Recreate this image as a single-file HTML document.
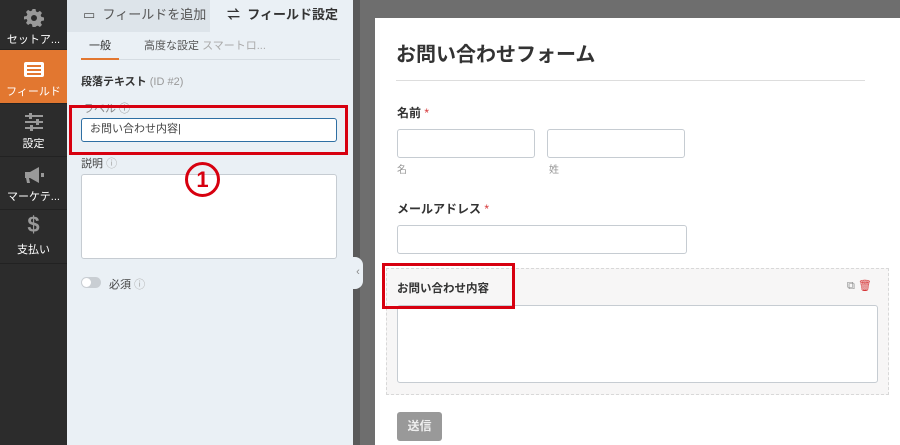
<!DOCTYPE html>
<html><head><meta charset="utf-8"><style>
*{box-sizing:border-box;margin:0;padding:0}
body{width:900px;height:445px;overflow:hidden;position:relative;font-family:"Liberation Sans","Noto Sans CJK JP",sans-serif;background:#6e6e6e}
.abs{position:absolute}
#side{left:0;top:0;width:67px;height:445px;background:#2c2c2c}
.nav{position:absolute;left:0;width:67px;height:53px;color:#fff;font-size:11px;text-align:center;border-bottom:1px solid #222}
.nav .ic{height:28px;display:flex;align-items:flex-end;justify-content:center}
#panel{left:67px;top:0;width:286px;height:445px;background:#eaf0f5}
.lbl{font-size:11px;color:#444}
.inp{background:#fff;border:1px solid #c6ccd2;border-radius:3px}
#card{left:375px;top:18px;width:525px;height:427px;background:#fff}
.fl{font-size:12px;font-weight:bold;color:#333}
.req{color:#d63638;font-weight:normal}
.red{border:3px solid #d7000f}
</style></head><body>
<div id="side" class="abs">
 <div class="nav" style="top:0;height:50px"><div class="ic"><svg width="20" height="20" viewBox="0 0 20 20"><path fill="#999" d="M8.5 1h3l.5 2.5 1.8.8 2.1-1.4 2.1 2.1-1.4 2.1.8 1.8 2.6.6v3l-2.6.5-.8 1.8 1.4 2.1-2.1 2.1-2.1-1.4-1.8.8L11.5 19h-3l-.5-2.6-1.8-.8-2.1 1.4-2.1-2.1 1.4-2.1-.8-1.8L0 11.5v-3l2.6-.5.8-1.8L2 4l2.1-2.1 2.1 1.4L8 2.5z"/><circle cx="10" cy="10" r="3" fill="#2c2c2c"/></svg></div><div style="margin-top:3px">セットア...</div></div>
 <div class="nav" style="top:50px;height:54px;background:#e27730"><div class="ic"><svg width="22" height="18"><rect x="1" y="2" width="20" height="15" rx="2" fill="#fff"/><rect x="4" y="5" width="14" height="2" fill="#e27730"/><rect x="4" y="9" width="14" height="2" fill="#e27730"/><rect x="4" y="13" width="14" height="2" fill="#e27730"/></svg></div><div style="margin-top:5px">フィールド</div></div>
 <div class="nav" style="top:104px"><div class="ic"><svg width="20" height="20"><g fill="#999"><rect x="1" y="3" width="18" height="2"/><rect x="1" y="9" width="18" height="2"/><rect x="1" y="15" width="18" height="2"/><rect x="5" y="1" width="3" height="6"/><rect x="12" y="7" width="3" height="6"/><rect x="6" y="13" width="3" height="6"/></g></svg></div><div style="margin-top:3px">設定</div></div>
 <div class="nav" style="top:157px"><div class="ic"><svg width="22" height="20"><path fill="#999" d="M2 7h5l9-5v16l-9-5H6l1 5H4l-1-5H2z"/><rect x="18" y="8" width="3" height="4" fill="#999"/></svg></div><div style="margin-top:3px">マーケテ...</div></div>
 <div class="nav" style="top:210px;height:54px"><div class="ic" style="font-size:22px;font-weight:bold;color:#999">$</div><div style="margin-top:3px">支払い</div></div>
</div>
<div id="panel" class="abs">
 <div class="abs" style="left:0;top:0;width:143px;height:32px;background:#dde4ea;color:#555;font-size:13px;line-height:30px;padding-left:16px">▭&nbsp; フィールドを追加</div>
 <div class="abs" style="left:160px;top:0;width:126px;height:32px;color:#333;font-size:13px;font-weight:bold;line-height:30px">⇌&nbsp; フィールド設定</div>
 <div class="abs" style="left:14px;top:37px;width:259px;height:23px;border-bottom:1px solid #d5dce2"></div>
 <div class="abs" style="left:14px;top:37px;width:38px;height:23px;border-bottom:2px solid #e27730;font-size:11px;color:#333;text-align:center;line-height:18px">一般</div>
 <div class="abs" style="left:77px;top:37px;font-size:11px;color:#555;line-height:18px">高度な設定 <span style="color:#aaa">スマートロ...</span></div>
 <div class="abs" style="left:14px;top:73px;font-size:11px;font-weight:bold;color:#333">段落テキスト <span style="font-weight:normal;color:#999">(ID #2)</span></div>
 <div class="abs lbl" style="left:16px;top:100px;color:#888">ラベル ⓘ</div>
 <div class="abs inp" style="left:14px;top:118px;width:256px;height:24px;border:1.5px solid #2e6fa3;font-size:11px;color:#444;line-height:21px;padding-left:8px">お問い合わせ内容|</div>
 <div class="abs red" style="left:2px;top:105px;width:279px;height:50px"></div>
 <div class="abs lbl" style="left:14px;top:155px">説明 <span style="color:#aaa">ⓘ</span></div>
 <div class="abs inp" style="left:14px;top:174px;width:256px;height:85px"></div>
 <div class="abs" style="left:118px;top:162px;width:35px;height:35px;border:3px solid #d7000f;border-radius:50%;color:#d7000f;font-size:22px;font-weight:bold;text-align:center;line-height:29px">1</div>
 <div class="abs" style="left:14px;top:277px;width:20px;height:11px;border-radius:6px;background:#c9ced3"><div style="width:9px;height:9px;margin:1px;border-radius:50%;background:#fff"></div></div>
 <div class="abs lbl" style="left:42px;top:276px">必須 <span style="color:#aaa">ⓘ</span></div>
</div>
<div class="abs" style="left:353px;top:0;width:7px;height:445px;background:#5a5a5a"></div>
<div class="abs" style="left:353px;top:257px;width:10px;height:32px;background:#eaf0f5;border-radius:0 8px 8px 0;color:#888;font-size:11px;line-height:30px;text-align:center">‹</div>
<div id="card" class="abs">
 <div class="abs" style="left:21px;top:20px;font-size:20px;font-weight:bold;color:#333">お問い合わせフォーム</div>
 <div class="abs" style="left:21px;top:62px;width:469px;height:1px;background:#ddd"></div>
 <div class="abs fl" style="left:22px;top:86px">名前 <span class="req">*</span></div>
 <div class="abs inp" style="left:22px;top:111px;width:138px;height:29px"></div>
 <div class="abs inp" style="left:172px;top:111px;width:138px;height:29px"></div>
 <div class="abs" style="left:22px;top:143px;font-size:10px;color:#999">名</div>
 <div class="abs" style="left:174px;top:143px;font-size:10px;color:#999">姓</div>
 <div class="abs fl" style="left:22px;top:182px">メールアドレス <span class="req">*</span></div>
 <div class="abs inp" style="left:22px;top:207px;width:290px;height:29px"></div>
 <div class="abs" style="left:11px;top:250px;width:503px;height:127px;background:#f7f6f6;border:1px dashed #d8d8d8"></div>
 <div class="abs fl" style="left:22px;top:262px;font-size:11.5px">お問い合わせ内容</div>
 <div class="abs" style="left:472px;top:261px;font-size:11px;color:#888">⧉ <span style="color:#d63638">🗑︎</span></div>
 <div class="abs inp" style="left:22px;top:287px;width:481px;height:78px"></div>
 <div class="abs red" style="left:7px;top:245px;width:133px;height:46px"></div>
 <div class="abs" style="left:22px;top:394px;width:45px;height:29px;background:#999;border-radius:3px;color:#eee;font-size:12px;font-weight:bold;text-align:center;line-height:29px">送信</div>
</div>
</body></html>
